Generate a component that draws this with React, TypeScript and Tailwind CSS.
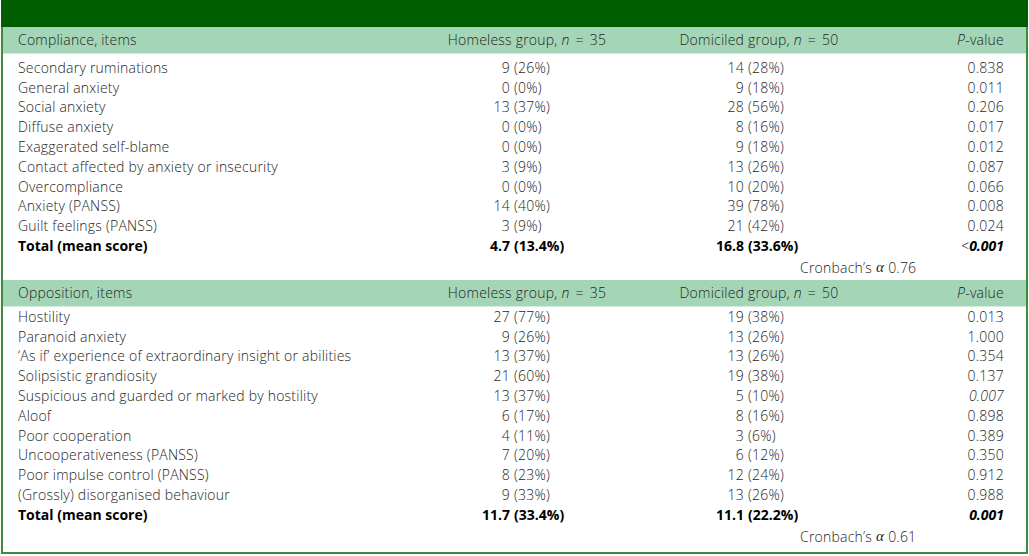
const compliance = [
  ["Secondary ruminations", "9", "26%", "14", "28%", "0.838"],
  ["General anxiety", "0", "0%", "9", "18%", "0.011"],
  ["Social anxiety", "13", "37%", "28", "56%", "0.206"],
  ["Diffuse anxiety", "0", "0%", "8", "16%", "0.017"],
  ["Exaggerated self-blame", "0", "0%", "9", "18%", "0.012"],
  ["Contact affected by anxiety or insecurity", "3", "9%", "13", "26%", "0.087"],
  ["Overcompliance", "0", "0%", "10", "20%", "0.066"],
  ["Anxiety (PANSS)", "14", "40%", "39", "78%", "0.008"],
  ["Guilt feelings (PANSS)", "3", "9%", "21", "42%", "0.024"],
]

const opposition = [
  ["Hostility", "27", "77%", "19", "38%", "0.013"],
  ["Paranoid anxiety", "9", "26%", "13", "26%", "1.000"],
  ["\u2018As if\u2019 experience of extraordinary insight or abilities", "13", "37%", "13", "26%", "0.354"],
  ["Solipsistic grandiosity", "21", "60%", "19", "38%", "0.137"],
  ["Suspicious and guarded or marked by hostility", "13", "37%", "5", "10%", "0.007"],
  ["Aloof", "6", "17%", "8", "16%", "0.898"],
  ["Poor cooperation", "4", "11%", "3", "6%", "0.389"],
  ["Uncooperativeness (PANSS)", "7", "20%", "6", "12%", "0.350"],
  ["Poor impulse control (PANSS)", "8", "23%", "12", "24%", "0.912"],
  ["(Grossly) disorganised behaviour", "9", "33%", "13", "26%", "0.988"],
]

function HeaderRow({ title }: { title: string }) {
  return (
    <div className="grid grid-cols-[409px_230px_234px_128px] h-[27px] items-center bg-[#a4d5b6] border-b border-[#d4ece0]">
      <div className="pl-[15px]">{title}</div>
      <div className="text-center">
        Homeless group, <i>n</i>
        <span className="mx-[6px]">=</span>35
      </div>
      <div className="text-center">
        Domiciled group, <i>n</i>
        <span className="mx-[6px]">=</span>50
      </div>
      <div className="text-right">
        <i>P</i>-value
      </div>
    </div>
  )
}

function Count({ n, pct, w }: { n: string; pct: string; w: string }) {
  return (
    <div className="flex">
      <span className={`${w} text-right`}>{n}</span>
      <span className="pl-[4px]">({pct})</span>
    </div>
  )
}

function DataRow({ row, italicP }: { row: string[]; italicP?: boolean }) {
  const [label, hn, hp, dn, dp, p] = row
  return (
    <div className="grid grid-cols-[467px_232px_174px_128px] h-[19.8px] items-center">
      <div className="pl-[15px] whitespace-nowrap">{label}</div>
      <Count n={hn} pct={hp} w="w-[40px]" />
      <Count n={dn} pct={dp} w="w-[42px]" />
      <div className={`text-right ${italicP ? "italic" : ""}`}>{p}</div>
    </div>
  )
}

function TotalRow({ h, d, p, lt }: { h: string[]; d: string[]; p: string; lt?: boolean }) {
  return (
    <div className="grid grid-cols-[467px_232px_174px_128px] h-[19.8px] items-center font-bold text-black tracking-normal">
      <div className="pl-[15px]">Total (mean score)</div>
      <Count n={h[0]} pct={h[1]} w="w-[40px]" />
      <Count n={d[0]} pct={d[1]} w="w-[42px]" />
      <div className="text-right">
        {lt && <span className="font-light">&lt;</span>}
        <i>{p}</i>
      </div>
    </div>
  )
}

function Cronbach({ value }: { value: string }) {
  return (
    <div className="h-[24px] flex items-center pl-[797px]">
      Cronbach&rsquo;s{" "}
      <i className="px-[4px] font-['Liberation_Serif',serif] font-normal text-[15px]">&alpha;</i> {value}
    </div>
  )
}

export default function App() {
  return (
    <div className="w-[1029px] h-[556px] bg-white font-['Open_Sans',sans-serif] text-[14px] font-light tracking-[0.22px] text-[#1e1e1e] leading-none">
      <div className="ml-[1px] w-[1027px]">
        <div className="h-[27px] bg-[#005e00]" />
        <div className="border-x-2 border-b-2 border-[#3c8c3c] h-[527px]">
          <HeaderRow title="Compliance, items" />
          <div className="pt-[4px]">
            {compliance.map((r) => (
              <DataRow key={r[0]} row={r} />
            ))}
            <TotalRow h={["4.7", "13.4%"]} d={["16.8", "33.6%"]} p="0.001" lt />
            <Cronbach value="0.76" />
          </div>
          <HeaderRow title="Opposition, items" />
          <div>
            {opposition.map((r) => (
              <DataRow key={r[0]} row={r} italicP={r[5] === "0.007"} />
            ))}
            <TotalRow h={["11.7", "33.4%"]} d={["11.1", "22.2%"]} p="0.001" />
            <Cronbach value="0.61" />
          </div>
        </div>
      </div>
    </div>
  )
}
